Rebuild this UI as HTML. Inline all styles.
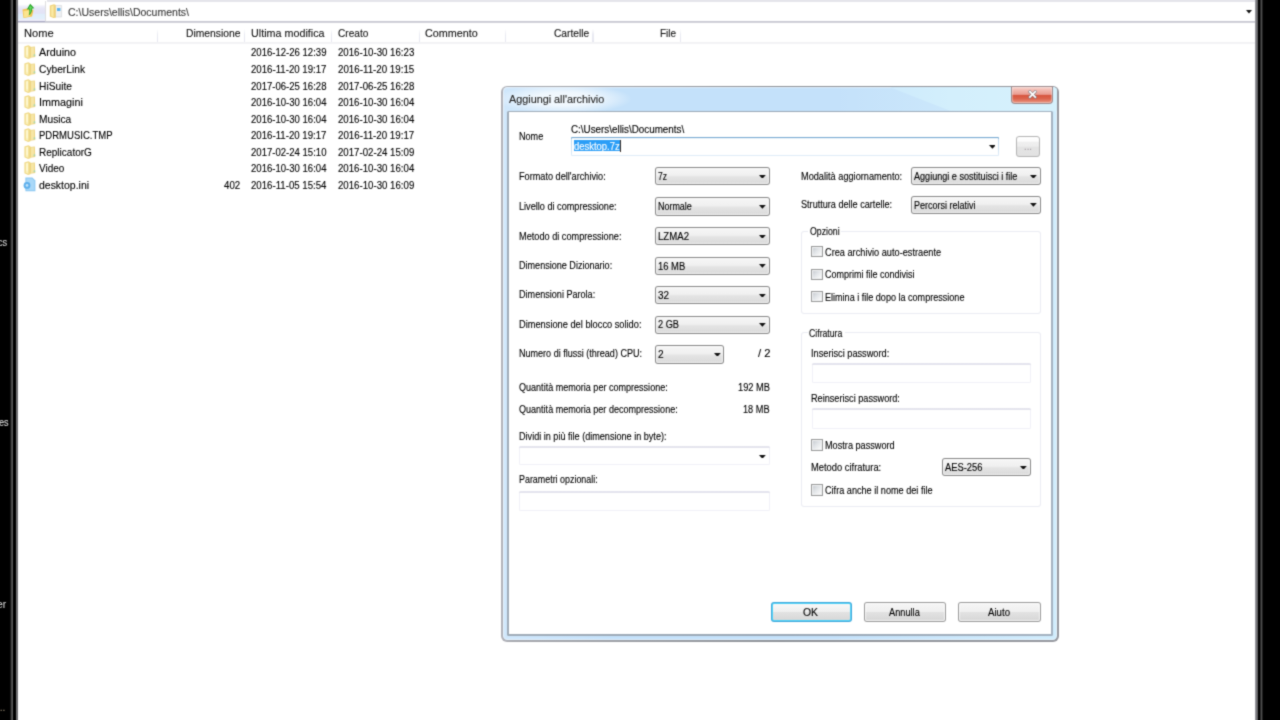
<!DOCTYPE html>
<html lang="it"><head><meta charset="utf-8"><title>Aggiungi all'archivio</title>
<style>
html,body{margin:0;padding:0;background:#000;}
body{width:1280px;height:720px;overflow:hidden;font-family:"Liberation Sans",sans-serif;}
#wrap{position:absolute;left:-20px;top:-20px;width:1320px;height:760px;overflow:hidden;background:#000;filter:url(#soft);}
#root{position:absolute;left:20px;top:20px;width:1280px;height:720px;background:#000;}
.t{position:absolute;-webkit-text-stroke:0.12px currentColor;transform-origin:0 0;white-space:pre;line-height:14px;height:14px;display:block;}

</style></head>
<body>
<svg width="0" height="0" style="position:absolute" aria-hidden="true"><defs><filter id="soft" x="0" y="0" width="100%" height="100%" color-interpolation-filters="sRGB"><feConvolveMatrix order="3" kernelMatrix="0.03 0.1 0.03 0.1 0.48 0.1 0.03 0.1 0.03" divisor="1" edgeMode="duplicate" preserveAlpha="true"/></filter></defs></svg>
<div id="wrap"><div id="root">
<div style="position:absolute;left:-20.00px;top:-20.00px;width:1320.00px;height:760.00px;background:#000"></div>
<div style="position:absolute;left:10.40px;top:-20.00px;width:2.80px;height:760.00px;background:linear-gradient(90deg,#000 0%,#303030 30%,#5c5c5c 70%,#585858 100%)"></div>
<div style="position:absolute;left:13.20px;top:-20.00px;width:2.60px;height:760.00px;background:#000"></div>
<div style="position:absolute;left:15.80px;top:-20.00px;width:2.40px;height:760.00px;background:linear-gradient(90deg,#5a5a5a 0%,#747474 25%,#727274 60%,#68686e 88%,#9c9ca4 100%)"></div>
<div style="position:absolute;left:1254.60px;top:-20.00px;width:3.70px;height:760.00px;background:linear-gradient(90deg,#c8c8ce 0%,#8c8c92 20%,#747478 55%,#585858 100%)"></div>
<div style="position:absolute;left:1258.30px;top:-20.00px;width:1.70px;height:760.00px;background:#020202"></div>
<div style="position:absolute;left:1259.70px;top:-20.00px;width:3.50px;height:760.00px;background:linear-gradient(90deg,#141414 0%,#3c3c3c 30%,#4e4e4e 50%,#3a3a3a 70%,#000 100%)"></div>
<div style="position:absolute;left:18.10px;top:-20.00px;width:1236.60px;height:760.00px;background:#fff"></div>
<div style="position:absolute;left:46.60px;top:-20.00px;width:1208.10px;height:22.30px;background:#e5e5eb"></div>
<div style="position:absolute;left:18.10px;top:0.00px;width:26.50px;height:21.50px;background:linear-gradient(180deg,#fff 0%,#fff 20%,#f0f0fa 28%,#e5e5f6 40%,#e3e3f6 60%,#e0eefb 66%,#e2effb 84%,#eeeefa 90%,#f0f0fa 100%)"></div>
<div style="position:absolute;left:44.60px;top:1.00px;width:1.80px;height:20.50px;background:linear-gradient(90deg,#f2f2f2,#dedee0 50%,#f4f4f4)"></div>
<div style="position:absolute;left:18.10px;top:21.00px;width:1236.60px;height:1.60px;background:linear-gradient(180deg,#d0d0d8,#c2c2cc 50%,#e4e4ea)"></div>
<div style="position:absolute;left:18.10px;top:20.80px;width:26.90px;height:1.60px;background:linear-gradient(180deg,#c0c0d6,#a9a9c4 50%,#d0d0de)"></div>
<svg style="position:absolute;left:21px;top:3px" width="15" height="16" viewBox="0 0 15 16">
<path d="M1.5 6.5 L6 5.5 L12.5 7 L11 13.5 L2.5 15 Z" fill="#f3c453"/>
<path d="M2.5 8 L9 7 L8.5 13.2 L3 14.5 Z" fill="#fbe48f"/>
<path d="M9.2 0.8 L13.3 5.2 L11.2 5.6 C11.3 8.5 10 11 7.6 12.6 C8.6 10 8.6 7.8 8 6.2 L5.8 6.6 Z" fill="#25a325"/>
<path d="M9.3 2.6 L11.6 5 L10.3 5.2 C10.4 7.5 9.8 9.3 8.8 10.6 C9.2 8.6 9.1 7 8.7 5.4 L7.6 5.6 Z" fill="#5fd65a"/>
</svg>
<svg style="position:absolute;left:49px;top:2.6px" width="14" height="16" viewBox="0 0 14 16">
<path d="M6.5 2.5 L12.6 2.5 L12.6 14 L6.5 14 Z" fill="#eef0f2" stroke="#d2d4d8" stroke-width="0.6"/>
<rect x="8" y="5" width="3.4" height="3" fill="#5db3ee"/>
<path d="M0.8 2.6 L5 1.2 L6.8 2 L6.8 14.8 L4.4 15 L0.8 13.4 Z" fill="#efd27c"/>
<path d="M2.2 3.2 L4.6 2.4 L4.6 14 L2.2 13 Z" fill="#faeaa6"/>
</svg>
<span class="t " style="left:67.80px;top:5.00px;font-size:10.6px;transform:scaleX(0.9930);color:#3a3a3a;">C:\Users\ellis\Documents\</span>
<svg style="position:absolute;left:1245.6px;top:10px" width="6" height="3.6" viewBox="0 0 6 3.6"><path d="M0 0 L6 0 L3 3.6 Z" fill="#111"/></svg>
<span class="t " style="left:24.20px;top:26.40px;font-size:10.6px;transform:scaleX(1.0494);color:#141414;">Nome</span>
<span class="t " style="left:185.80px;top:26.40px;font-size:10.6px;transform:scaleX(0.9738);color:#141414;">Dimensione</span>
<span class="t " style="left:250.80px;top:26.40px;font-size:10.6px;transform:scaleX(1.0151);color:#141414;">Ultima modifica</span>
<span class="t " style="left:337.80px;top:26.40px;font-size:10.6px;transform:scaleX(0.9528);color:#141414;">Creato</span>
<span class="t " style="left:424.80px;top:26.40px;font-size:10.6px;transform:scaleX(1.0167);color:#141414;">Commento</span>
<span class="t " style="left:553.50px;top:26.40px;font-size:10.6px;transform:scaleX(0.9639);color:#141414;">Cartelle</span>
<span class="t " style="left:659.70px;top:26.40px;font-size:10.6px;transform:scaleX(0.9434);color:#141414;">File</span>
<div style="position:absolute;left:156.90px;top:29.00px;width:1.20px;height:14.00px;background:linear-gradient(180deg,#fff,#e9eaf2 40%,#e6e7f0)"></div>
<div style="position:absolute;left:243.90px;top:29.00px;width:1.20px;height:14.00px;background:linear-gradient(180deg,#fff,#e9eaf2 40%,#e6e7f0)"></div>
<div style="position:absolute;left:331.20px;top:29.00px;width:1.20px;height:14.00px;background:linear-gradient(180deg,#fff,#e9eaf2 40%,#e6e7f0)"></div>
<div style="position:absolute;left:418.80px;top:29.00px;width:1.20px;height:14.00px;background:linear-gradient(180deg,#fff,#e9eaf2 40%,#e6e7f0)"></div>
<div style="position:absolute;left:504.70px;top:29.00px;width:1.20px;height:14.00px;background:linear-gradient(180deg,#fff,#e9eaf2 40%,#e6e7f0)"></div>
<div style="position:absolute;left:592.40px;top:29.00px;width:1.20px;height:14.00px;background:linear-gradient(180deg,#fff,#e9eaf2 40%,#e6e7f0)"></div>
<div style="position:absolute;left:679.80px;top:29.00px;width:1.20px;height:14.00px;background:linear-gradient(180deg,#fff,#e9eaf2 40%,#e6e7f0)"></div>
<div style="position:absolute;left:18.10px;top:42.40px;width:1236.60px;height:1.40px;background:linear-gradient(180deg,#f6f6f8,#eeeef1 50%,#f8f8fa)"></div>
<svg style="position:absolute;left:23.5px;top:44.7px" width="12.6" height="14.2" viewBox="0 0 13 15" preserveAspectRatio="none">
<path d="M6.2 2.2 L11.2 1.6 L11.6 12.6 L6.2 13.6 Z" fill="#ecd27e"/>
<path d="M7.2 2.6 L10.4 2.3 L10.6 12 L7.2 12.6 Z" fill="#f6e6a6"/>
<path d="M0.4 1.6 L4.4 0.3 L6.7 1.2 L6.7 14 L4.2 14.7 L0.4 13 Z" fill="#f0d988"/>
<path d="M1.7 2.3 L4.5 1.5 L4.5 13.4 L1.7 12.3 Z" fill="#fbf1b8"/>
<path d="M2.6 2.6 L3.8 2.2 L3.8 11 L2.6 10.4 Z" fill="#fefbe0"/>
<path d="M10 10 L11.5 9.8 L11.6 11.6 L10 11.9 Z" fill="#9fd4b0"/>
</svg>
<span class="t " style="left:39.00px;top:45.00px;font-size:10.6px;transform:scaleX(1.0146);color:#000;">Arduino</span>
<span class="t " style="left:250.80px;top:45.00px;font-size:10.6px;transform:scaleX(0.9022);color:#000;">2016-12-26 12:39</span>
<span class="t " style="left:337.80px;top:45.00px;font-size:10.6px;transform:scaleX(0.9117);color:#000;">2016-10-30 16:23</span>
<svg style="position:absolute;left:23.5px;top:61.7px" width="12.6" height="14.2" viewBox="0 0 13 15" preserveAspectRatio="none">
<path d="M6.2 2.2 L11.2 1.6 L11.6 12.6 L6.2 13.6 Z" fill="#ecd27e"/>
<path d="M7.2 2.6 L10.4 2.3 L10.6 12 L7.2 12.6 Z" fill="#f6e6a6"/>
<path d="M0.4 1.6 L4.4 0.3 L6.7 1.2 L6.7 14 L4.2 14.7 L0.4 13 Z" fill="#f0d988"/>
<path d="M1.7 2.3 L4.5 1.5 L4.5 13.4 L1.7 12.3 Z" fill="#fbf1b8"/>
<path d="M2.6 2.6 L3.8 2.2 L3.8 11 L2.6 10.4 Z" fill="#fefbe0"/>
<path d="M10 10 L11.5 9.8 L11.6 11.6 L10 11.9 Z" fill="#9fd4b0"/>
</svg>
<span class="t " style="left:39.00px;top:62.00px;font-size:10.6px;transform:scaleX(0.9643);color:#000;">CyberLink</span>
<span class="t " style="left:250.80px;top:62.00px;font-size:10.6px;transform:scaleX(0.9108);color:#000;">2016-11-20 19:17</span>
<span class="t " style="left:337.80px;top:62.00px;font-size:10.6px;transform:scaleX(0.9205);color:#000;">2016-11-20 19:15</span>
<svg style="position:absolute;left:23.5px;top:78.7px" width="12.6" height="14.2" viewBox="0 0 13 15" preserveAspectRatio="none">
<path d="M6.2 2.2 L11.2 1.6 L11.6 12.6 L6.2 13.6 Z" fill="#ecd27e"/>
<path d="M7.2 2.6 L10.4 2.3 L10.6 12 L7.2 12.6 Z" fill="#f6e6a6"/>
<path d="M0.4 1.6 L4.4 0.3 L6.7 1.2 L6.7 14 L4.2 14.7 L0.4 13 Z" fill="#f0d988"/>
<path d="M1.7 2.3 L4.5 1.5 L4.5 13.4 L1.7 12.3 Z" fill="#fbf1b8"/>
<path d="M2.6 2.6 L3.8 2.2 L3.8 11 L2.6 10.4 Z" fill="#fefbe0"/>
<path d="M10 10 L11.5 9.8 L11.6 11.6 L10 11.9 Z" fill="#9fd4b0"/>
</svg>
<span class="t " style="left:39.00px;top:79.00px;font-size:10.6px;transform:scaleX(0.9653);color:#000;">HiSuite</span>
<span class="t " style="left:250.80px;top:79.00px;font-size:10.6px;transform:scaleX(0.9022);color:#000;">2017-06-25 16:28</span>
<span class="t " style="left:337.80px;top:79.00px;font-size:10.6px;transform:scaleX(0.9117);color:#000;">2017-06-25 16:28</span>
<svg style="position:absolute;left:23.5px;top:94.7px" width="12.6" height="14.2" viewBox="0 0 13 15" preserveAspectRatio="none">
<path d="M6.2 2.2 L11.2 1.6 L11.6 12.6 L6.2 13.6 Z" fill="#ecd27e"/>
<path d="M7.2 2.6 L10.4 2.3 L10.6 12 L7.2 12.6 Z" fill="#f6e6a6"/>
<path d="M0.4 1.6 L4.4 0.3 L6.7 1.2 L6.7 14 L4.2 14.7 L0.4 13 Z" fill="#f0d988"/>
<path d="M1.7 2.3 L4.5 1.5 L4.5 13.4 L1.7 12.3 Z" fill="#fbf1b8"/>
<path d="M2.6 2.6 L3.8 2.2 L3.8 11 L2.6 10.4 Z" fill="#fefbe0"/>
<path d="M10 10 L11.5 9.8 L11.6 11.6 L10 11.9 Z" fill="#9fd4b0"/>
</svg>
<span class="t " style="left:39.00px;top:95.00px;font-size:10.6px;transform:scaleX(1.0213);color:#000;">Immagini</span>
<span class="t " style="left:250.80px;top:95.00px;font-size:10.6px;transform:scaleX(0.9022);color:#000;">2016-10-30 16:04</span>
<span class="t " style="left:337.80px;top:95.00px;font-size:10.6px;transform:scaleX(0.9117);color:#000;">2016-10-30 16:04</span>
<svg style="position:absolute;left:23.5px;top:111.7px" width="12.6" height="14.2" viewBox="0 0 13 15" preserveAspectRatio="none">
<path d="M6.2 2.2 L11.2 1.6 L11.6 12.6 L6.2 13.6 Z" fill="#ecd27e"/>
<path d="M7.2 2.6 L10.4 2.3 L10.6 12 L7.2 12.6 Z" fill="#f6e6a6"/>
<path d="M0.4 1.6 L4.4 0.3 L6.7 1.2 L6.7 14 L4.2 14.7 L0.4 13 Z" fill="#f0d988"/>
<path d="M1.7 2.3 L4.5 1.5 L4.5 13.4 L1.7 12.3 Z" fill="#fbf1b8"/>
<path d="M2.6 2.6 L3.8 2.2 L3.8 11 L2.6 10.4 Z" fill="#fefbe0"/>
<path d="M10 10 L11.5 9.8 L11.6 11.6 L10 11.9 Z" fill="#9fd4b0"/>
</svg>
<span class="t " style="left:39.00px;top:112.00px;font-size:10.6px;transform:scaleX(0.9613);color:#000;">Musica</span>
<span class="t " style="left:250.80px;top:112.00px;font-size:10.6px;transform:scaleX(0.9022);color:#000;">2016-10-30 16:04</span>
<span class="t " style="left:337.80px;top:112.00px;font-size:10.6px;transform:scaleX(0.9117);color:#000;">2016-10-30 16:04</span>
<svg style="position:absolute;left:23.5px;top:127.7px" width="12.6" height="14.2" viewBox="0 0 13 15" preserveAspectRatio="none">
<path d="M6.2 2.2 L11.2 1.6 L11.6 12.6 L6.2 13.6 Z" fill="#ecd27e"/>
<path d="M7.2 2.6 L10.4 2.3 L10.6 12 L7.2 12.6 Z" fill="#f6e6a6"/>
<path d="M0.4 1.6 L4.4 0.3 L6.7 1.2 L6.7 14 L4.2 14.7 L0.4 13 Z" fill="#f0d988"/>
<path d="M1.7 2.3 L4.5 1.5 L4.5 13.4 L1.7 12.3 Z" fill="#fbf1b8"/>
<path d="M2.6 2.6 L3.8 2.2 L3.8 11 L2.6 10.4 Z" fill="#fefbe0"/>
<path d="M10 10 L11.5 9.8 L11.6 11.6 L10 11.9 Z" fill="#9fd4b0"/>
</svg>
<span class="t " style="left:39.00px;top:128.00px;font-size:10.6px;transform:scaleX(0.8988);color:#000;">PDRMUSIC.TMP</span>
<span class="t " style="left:250.80px;top:128.00px;font-size:10.6px;transform:scaleX(0.9108);color:#000;">2016-11-20 19:17</span>
<span class="t " style="left:337.80px;top:128.00px;font-size:10.6px;transform:scaleX(0.9205);color:#000;">2016-11-20 19:17</span>
<svg style="position:absolute;left:23.5px;top:144.7px" width="12.6" height="14.2" viewBox="0 0 13 15" preserveAspectRatio="none">
<path d="M6.2 2.2 L11.2 1.6 L11.6 12.6 L6.2 13.6 Z" fill="#ecd27e"/>
<path d="M7.2 2.6 L10.4 2.3 L10.6 12 L7.2 12.6 Z" fill="#f6e6a6"/>
<path d="M0.4 1.6 L4.4 0.3 L6.7 1.2 L6.7 14 L4.2 14.7 L0.4 13 Z" fill="#f0d988"/>
<path d="M1.7 2.3 L4.5 1.5 L4.5 13.4 L1.7 12.3 Z" fill="#fbf1b8"/>
<path d="M2.6 2.6 L3.8 2.2 L3.8 11 L2.6 10.4 Z" fill="#fefbe0"/>
<path d="M10 10 L11.5 9.8 L11.6 11.6 L10 11.9 Z" fill="#9fd4b0"/>
</svg>
<span class="t " style="left:39.00px;top:145.00px;font-size:10.6px;transform:scaleX(0.9452);color:#000;">ReplicatorG</span>
<span class="t " style="left:250.80px;top:145.00px;font-size:10.6px;transform:scaleX(0.9022);color:#000;">2017-02-24 15:10</span>
<span class="t " style="left:337.80px;top:145.00px;font-size:10.6px;transform:scaleX(0.9117);color:#000;">2017-02-24 15:09</span>
<svg style="position:absolute;left:23.5px;top:160.7px" width="12.6" height="14.2" viewBox="0 0 13 15" preserveAspectRatio="none">
<path d="M6.2 2.2 L11.2 1.6 L11.6 12.6 L6.2 13.6 Z" fill="#ecd27e"/>
<path d="M7.2 2.6 L10.4 2.3 L10.6 12 L7.2 12.6 Z" fill="#f6e6a6"/>
<path d="M0.4 1.6 L4.4 0.3 L6.7 1.2 L6.7 14 L4.2 14.7 L0.4 13 Z" fill="#f0d988"/>
<path d="M1.7 2.3 L4.5 1.5 L4.5 13.4 L1.7 12.3 Z" fill="#fbf1b8"/>
<path d="M2.6 2.6 L3.8 2.2 L3.8 11 L2.6 10.4 Z" fill="#fefbe0"/>
<path d="M10 10 L11.5 9.8 L11.6 11.6 L10 11.9 Z" fill="#9fd4b0"/>
</svg>
<span class="t " style="left:39.00px;top:161.00px;font-size:10.6px;transform:scaleX(0.9434);color:#000;">Video</span>
<span class="t " style="left:250.80px;top:161.00px;font-size:10.6px;transform:scaleX(0.9022);color:#000;">2016-10-30 16:04</span>
<span class="t " style="left:337.80px;top:161.00px;font-size:10.6px;transform:scaleX(0.9117);color:#000;">2016-10-30 16:04</span>
<svg style="position:absolute;left:23.1px;top:177.4px" width="13" height="15" viewBox="0 0 13 15">
<path d="M2.4 0.6 L9.4 0.6 L12.4 3.4 L12.4 14.2 L2.4 14.2 Z" fill="#8cc8f2"/>
<path d="M3.4 1.6 L9 1.6 L11.4 4 L11.4 13.2 L3.4 13.2 Z" fill="#a9d8f8"/>
<circle cx="4" cy="8.4" r="3.4" fill="#5fb0ec"/>
<circle cx="4" cy="8.4" r="1.4" fill="#bfe2fa"/>
</svg>
<span class="t " style="left:39.00px;top:178.00px;font-size:10.6px;transform:scaleX(0.9878);color:#000;">desktop.ini</span>
<span class="t " style="left:224.10px;top:178.00px;font-size:10.6px;transform:scaleX(0.9152);color:#000;">402</span>
<span class="t " style="left:250.80px;top:178.00px;font-size:10.6px;transform:scaleX(0.9108);color:#000;">2016-11-05 15:54</span>
<span class="t " style="left:337.80px;top:178.00px;font-size:10.6px;transform:scaleX(0.9117);color:#000;">2016-10-30 16:09</span>
<span class="t " style="left:-1.60px;top:235.00px;font-size:11.5px;transform:scaleX(0.8000);color:#d2d2d2;">cs</span>
<span class="t " style="left:-0.80px;top:415.00px;font-size:10.5px;transform:scaleX(0.8666);color:#dcdcdc;">es</span>
<span class="t " style="left:-2.60px;top:596.50px;font-size:11.5px;transform:scaleX(0.8891);color:#cfcfcf;">er</span>
<span class="t " style="left:-3.20px;top:700.00px;font-size:11px;transform:scaleX(0.9145);color:#9a8c74;">...</span>
<div style="position:absolute;left:501.20px;top:85.80px;width:557.60px;height:556.20px;border-radius:6px;background:linear-gradient(90deg,#b2b3ba 0%,#a6a8ae 2%,#8e9298 50%,#96989f 100%);"></div>
<div style="position:absolute;left:503.40px;top:87.30px;width:553.80px;height:552.50px;border-radius:4.5px;background:linear-gradient(90deg,#d0e7fb 0%,#c4e1fa 20%,#c4e1fa 60%,#cbe7fb 80%,#d0ecfc 100%);box-shadow:inset 0 0 0 1px rgba(255,255,255,.45)"></div>
<div style="position:absolute;left:880px;top:87.3px;width:177.2px;height:23.5px;background:linear-gradient(90deg,#cdeafc 0%,#d3effc 40%,#d6f1fc 100%);clip-path:polygon(10px 0,100% 0,100% 100%,70px 100%);border-radius:0 4px 0 0"></div>
<div style="position:absolute;left:496.00px;top:84.00px;width:136.00px;height:30.00px;background:radial-gradient(ellipse 50% 50% at center,rgba(255,255,255,.8) 0%,rgba(255,255,255,.7) 45%,rgba(255,255,255,.35) 75%,rgba(255,255,255,0) 100%);clip-path:inset(3px 0 2.5px 6.5px)"></div>
<span class="t " style="left:508.60px;top:92.30px;font-size:10.8px;transform:scaleX(1.0016);color:#262626;">Aggiungi all&#x27;archivio</span>
<div style="position:absolute;left:1011.2px;top:86.4px;width:41.6px;height:17.4px;border-radius:0 0 4px 4px;background:#9c8a8c;"></div>
<div style="position:absolute;left:1012.2px;top:87px;width:39.6px;height:15.9px;border-radius:0 0 3px 3px;background:linear-gradient(180deg,#f8d2cb 0%,#f0b3a9 25%,#e99d92 46%,#d7563f 52%,#db634c 72%,#e99682 100%);box-shadow:inset 0 0 0 1px rgba(255,255,255,.35)"></div>
<svg style="position:absolute;left:1028.2px;top:90.4px" width="9.2" height="8.8" viewBox="0 0 9.2 8.8"><path d="M1.9 1.7 L7.3 7.1 M7.3 1.7 L1.9 7.1" stroke="#6f7c8a" stroke-opacity=".75" stroke-width="3" stroke-linecap="square"/><path d="M1.9 1.7 L7.3 7.1 M7.3 1.7 L1.9 7.1" stroke="#fff" stroke-width="1.7" stroke-linecap="square"/></svg>
<div style="position:absolute;left:507.40px;top:110.80px;width:545.80px;height:525.40px;border-radius:1.5px;background:linear-gradient(90deg,#a0acb8 0%,#9aa8b6 50%,#a4b2c0 100%)"></div>
<div style="position:absolute;left:509.00px;top:112.10px;width:542.40px;height:522.10px;background:#fff"></div>
<span class="t " style="left:518.90px;top:129.50px;font-size:10px;transform:scaleX(0.9064);color:#000;">Nome</span>
<span class="t " style="left:570.70px;top:123.20px;font-size:10px;transform:scaleX(0.9839);color:#000;">C:\Users\ellis\Documents\</span>
<div style="position:absolute;left:571.00px;top:137.30px;width:428.40px;height:18.40px;border-radius:1px;background:linear-gradient(180deg,#6ea3cd 0%,#8db9da 7%,#c4dcef 13%,#cde1f2 60%,#e0edf8 100%)"></div>
<div style="position:absolute;left:572.00px;top:138.40px;width:426.40px;height:16.40px;background:linear-gradient(180deg,#e6f0f8 0,#fff 1.4px)"></div>
<div style="position:absolute;left:573.80px;top:140.20px;width:46.80px;height:11.30px;background:#2b9ef7"></div>
<span class="t " style="left:573.90px;top:140.30px;font-size:10px;transform:scaleX(0.9431);color:#fff;">desktop.7z</span>
<div style="position:absolute;left:620.30px;top:140.40px;width:0.90px;height:11.20px;background:#3a2a20"></div>
<svg style="position:absolute;left:988.6px;top:145.2px" width="6.8" height="3.8" viewBox="0 0 6.8 3.8"><path d="M0 0 L6.8 0 L3.4 3.8 Z" fill="#111"/></svg>
<div style="position:absolute;left:1015.60px;top:135.70px;width:24.80px;height:21.20px;border-radius:3.5px;background:#b4b4b4"></div>
<div style="position:absolute;left:1016.90px;top:137.00px;width:22.20px;height:18.60px;border-radius:2px;background:linear-gradient(180deg,#fff 0%,#fcfcfc 22%,#efefef 28%,#ededed 48%,#e3e3e3 54%,#e2e2e2 100%)"></div>
<span class="t " style="left:1023.50px;top:140.40px;font-size:10px;transform:scaleX(0.9581);color:#a8a0a8;">...</span>
<span class="t " style="left:518.90px;top:170.40px;font-size:10px;transform:scaleX(0.9150);color:#000;">Formato dell&#x27;archivio:</span>
<div style="position:absolute;left:654.80px;top:167.20px;width:114.80px;height:17.80px;border-radius:3px;background:#888"></div>
<div style="position:absolute;left:655.80px;top:168.20px;width:112.80px;height:15.80px;border-radius:2px;background:linear-gradient(180deg,#f6f6f6 0%,#f0f0f0 45%,#e4e4e4 55%,#dadada 100%);box-shadow:inset 0 0 0 1px rgba(255,255,255,.6)"></div>
<svg style="position:absolute;left:759.00px;top:174.50px" width="6.8" height="3.8" viewBox="0 0 6.8 3.8"><path d="M0 0 L6.8 0 L3.4 3.8 Z" fill="#111"/></svg>
<span class="t " style="left:657.90px;top:169.60px;font-size:10px;transform:scaleX(0.8531);color:#000;">7z</span>
<span class="t " style="left:518.90px;top:200.00px;font-size:10px;transform:scaleX(0.9138);color:#000;">Livello di compressione:</span>
<div style="position:absolute;left:654.80px;top:197.30px;width:114.80px;height:18.30px;border-radius:3px;background:#888"></div>
<div style="position:absolute;left:655.80px;top:198.30px;width:112.80px;height:16.30px;border-radius:2px;background:linear-gradient(180deg,#f6f6f6 0%,#f0f0f0 45%,#e4e4e4 55%,#dadada 100%);box-shadow:inset 0 0 0 1px rgba(255,255,255,.6)"></div>
<svg style="position:absolute;left:759.00px;top:204.85px" width="6.8" height="3.8" viewBox="0 0 6.8 3.8"><path d="M0 0 L6.8 0 L3.4 3.8 Z" fill="#111"/></svg>
<span class="t " style="left:657.90px;top:200.30px;font-size:10px;transform:scaleX(0.8942);color:#000;">Normale</span>
<span class="t " style="left:518.90px;top:229.60px;font-size:10px;transform:scaleX(0.9172);color:#000;">Metodo di compressione:</span>
<div style="position:absolute;left:654.80px;top:227.30px;width:114.80px;height:17.90px;border-radius:3px;background:#888"></div>
<div style="position:absolute;left:655.80px;top:228.30px;width:112.80px;height:15.90px;border-radius:2px;background:linear-gradient(180deg,#f6f6f6 0%,#f0f0f0 45%,#e4e4e4 55%,#dadada 100%);box-shadow:inset 0 0 0 1px rgba(255,255,255,.6)"></div>
<svg style="position:absolute;left:759.00px;top:234.65px" width="6.8" height="3.8" viewBox="0 0 6.8 3.8"><path d="M0 0 L6.8 0 L3.4 3.8 Z" fill="#111"/></svg>
<span class="t " style="left:657.90px;top:230.00px;font-size:10px;transform:scaleX(0.9612);color:#000;">LZMA2</span>
<span class="t " style="left:518.90px;top:258.90px;font-size:10px;transform:scaleX(0.9062);color:#000;">Dimensione Dizionario:</span>
<div style="position:absolute;left:654.80px;top:256.90px;width:114.80px;height:17.70px;border-radius:3px;background:#888"></div>
<div style="position:absolute;left:655.80px;top:257.90px;width:112.80px;height:15.70px;border-radius:2px;background:linear-gradient(180deg,#f6f6f6 0%,#f0f0f0 45%,#e4e4e4 55%,#dadada 100%);box-shadow:inset 0 0 0 1px rgba(255,255,255,.6)"></div>
<svg style="position:absolute;left:759.00px;top:264.15px" width="6.8" height="3.8" viewBox="0 0 6.8 3.8"><path d="M0 0 L6.8 0 L3.4 3.8 Z" fill="#111"/></svg>
<span class="t " style="left:657.90px;top:259.60px;font-size:10px;transform:scaleX(0.9412);color:#000;">16 MB</span>
<span class="t " style="left:518.90px;top:288.20px;font-size:10px;transform:scaleX(0.9077);color:#000;">Dimensioni Parola:</span>
<div style="position:absolute;left:654.80px;top:286.30px;width:114.80px;height:18.00px;border-radius:3px;background:#888"></div>
<div style="position:absolute;left:655.80px;top:287.30px;width:112.80px;height:16.00px;border-radius:2px;background:linear-gradient(180deg,#f6f6f6 0%,#f0f0f0 45%,#e4e4e4 55%,#dadada 100%);box-shadow:inset 0 0 0 1px rgba(255,255,255,.6)"></div>
<svg style="position:absolute;left:759.00px;top:293.70px" width="6.8" height="3.8" viewBox="0 0 6.8 3.8"><path d="M0 0 L6.8 0 L3.4 3.8 Z" fill="#111"/></svg>
<span class="t " style="left:657.90px;top:289.00px;font-size:10px;transform:scaleX(0.9910);color:#000;">32</span>
<span class="t " style="left:518.90px;top:317.60px;font-size:10px;transform:scaleX(0.9259);color:#000;">Dimensione del blocco solido:</span>
<div style="position:absolute;left:654.80px;top:315.80px;width:114.80px;height:18.00px;border-radius:3px;background:#888"></div>
<div style="position:absolute;left:655.80px;top:316.80px;width:112.80px;height:16.00px;border-radius:2px;background:linear-gradient(180deg,#f6f6f6 0%,#f0f0f0 45%,#e4e4e4 55%,#dadada 100%);box-shadow:inset 0 0 0 1px rgba(255,255,255,.6)"></div>
<svg style="position:absolute;left:759.00px;top:323.20px" width="6.8" height="3.8" viewBox="0 0 6.8 3.8"><path d="M0 0 L6.8 0 L3.4 3.8 Z" fill="#111"/></svg>
<span class="t " style="left:657.90px;top:318.40px;font-size:10px;transform:scaleX(0.9211);color:#000;">2 GB</span>
<span class="t " style="left:518.90px;top:347.00px;font-size:10px;transform:scaleX(0.9034);color:#000;">Numero di flussi (thread) CPU:</span>
<div style="position:absolute;left:654.80px;top:345.00px;width:69.60px;height:18.60px;border-radius:3px;background:#888"></div>
<div style="position:absolute;left:655.80px;top:346.00px;width:67.60px;height:16.60px;border-radius:2px;background:linear-gradient(180deg,#f6f6f6 0%,#f0f0f0 45%,#e4e4e4 55%,#dadada 100%);box-shadow:inset 0 0 0 1px rgba(255,255,255,.6)"></div>
<svg style="position:absolute;left:713.80px;top:352.70px" width="6.8" height="3.8" viewBox="0 0 6.8 3.8"><path d="M0 0 L6.8 0 L3.4 3.8 Z" fill="#111"/></svg>
<span class="t " style="left:657.90px;top:348.00px;font-size:10px;transform:scaleX(1.0090);color:#000;">2</span>
<span class="t " style="left:758.10px;top:347.20px;font-size:10px;transform:scaleX(1.1261);color:#000;">/ 2</span>
<span class="t " style="left:518.90px;top:380.50px;font-size:10px;transform:scaleX(0.9040);color:#000;">Quantità memoria per compressione:</span>
<span class="t " style="left:737.60px;top:380.50px;font-size:10px;transform:scaleX(0.9289);color:#000;">192 MB</span>
<span class="t " style="left:518.90px;top:403.00px;font-size:10px;transform:scaleX(0.9035);color:#000;">Quantità memoria per decompressione:</span>
<span class="t " style="left:743.10px;top:403.00px;font-size:10px;transform:scaleX(0.9170);color:#000;">18 MB</span>
<span class="t " style="left:518.90px;top:430.00px;font-size:10px;transform:scaleX(0.9088);color:#000;">Dividi in più file (dimensione in byte):</span>
<div style="position:absolute;left:519.20px;top:446.40px;width:250.60px;height:18.80px;border-radius:1.5px;background:linear-gradient(180deg,#e5e5ee 0,#e3e3ed 1.6px,#f0f0f7 2.2px,#f1f1f7 100%)"></div>
<div style="position:absolute;left:520.20px;top:448.40px;width:248.60px;height:15.80px;background:#fff"></div>
<svg style="position:absolute;left:758.8px;top:454.6px" width="6.8" height="3.8" viewBox="0 0 6.8 3.8"><path d="M0 0 L6.8 0 L3.4 3.8 Z" fill="#111"/></svg>
<span class="t " style="left:518.90px;top:473.00px;font-size:10px;transform:scaleX(0.8903);color:#000;">Parametri opzionali:</span>
<div style="position:absolute;left:519.20px;top:490.80px;width:250.60px;height:20.00px;border-radius:1.5px;background:linear-gradient(180deg,#e5e5ee 0,#e3e3ed 1.6px,#f0f0f7 2.2px,#f1f1f7 100%)"></div>
<div style="position:absolute;left:520.20px;top:492.80px;width:248.60px;height:17.00px;background:#fff"></div>
<span class="t " style="left:801.00px;top:170.20px;font-size:10px;transform:scaleX(0.9187);color:#000;">Modalità aggiornamento:</span>
<div style="position:absolute;left:910.60px;top:167.20px;width:130.20px;height:17.80px;border-radius:3px;background:#888"></div>
<div style="position:absolute;left:911.60px;top:168.20px;width:128.20px;height:15.80px;border-radius:2px;background:linear-gradient(180deg,#f6f6f6 0%,#f0f0f0 45%,#e4e4e4 55%,#dadada 100%);box-shadow:inset 0 0 0 1px rgba(255,255,255,.6)"></div>
<svg style="position:absolute;left:1030.40px;top:174.50px" width="6.8" height="3.8" viewBox="0 0 6.8 3.8"><path d="M0 0 L6.8 0 L3.4 3.8 Z" fill="#111"/></svg>
<span class="t " style="left:913.70px;top:169.80px;font-size:10px;transform:scaleX(0.9074);color:#000;">Aggiungi e sostituisci i file</span>
<span class="t " style="left:801.00px;top:198.40px;font-size:10px;transform:scaleX(0.9105);color:#000;">Struttura delle cartelle:</span>
<div style="position:absolute;left:910.60px;top:196.20px;width:130.20px;height:17.70px;border-radius:3px;background:#888"></div>
<div style="position:absolute;left:911.60px;top:197.20px;width:128.20px;height:15.70px;border-radius:2px;background:linear-gradient(180deg,#f6f6f6 0%,#f0f0f0 45%,#e4e4e4 55%,#dadada 100%);box-shadow:inset 0 0 0 1px rgba(255,255,255,.6)"></div>
<svg style="position:absolute;left:1030.40px;top:203.45px" width="6.8" height="3.8" viewBox="0 0 6.8 3.8"><path d="M0 0 L6.8 0 L3.4 3.8 Z" fill="#111"/></svg>
<span class="t " style="left:913.70px;top:198.60px;font-size:10px;transform:scaleX(0.8983);color:#000;">Percorsi relativi</span>
<div style="position:absolute;left:801.40px;top:231.00px;width:239.40px;height:83.40px;border-radius:3px;background:#ebecf3"></div>
<div style="position:absolute;left:802.40px;top:232.00px;width:237.40px;height:81.40px;border-radius:2px;background:#fff"></div>
<div style="position:absolute;left:808.20px;top:230.00px;width:33.30px;height:3.00px;background:#fff"></div>
<span class="t " style="left:809.50px;top:225.00px;font-size:10px;transform:scaleX(0.8732);color:#000;">Opzioni</span>
<div style="position:absolute;left:811.40px;top:246.00px;width:11.30px;height:11.30px;background:#989999"></div>
<div style="position:absolute;left:812.40px;top:247.00px;width:9.30px;height:9.30px;background:#f2f3f4"></div>
<div style="position:absolute;left:813.40px;top:248.00px;width:7.30px;height:7.30px;background:linear-gradient(135deg,#c9cdd2 0%,#e2e5e8 45%,#fafafa 100%)"></div>
<span class="t " style="left:824.50px;top:245.80px;font-size:10px;transform:scaleX(0.9200);color:#000;">Crea archivio auto-estraente</span>
<div style="position:absolute;left:811.40px;top:268.80px;width:11.30px;height:11.30px;background:#989999"></div>
<div style="position:absolute;left:812.40px;top:269.80px;width:9.30px;height:9.30px;background:#f2f3f4"></div>
<div style="position:absolute;left:813.40px;top:270.80px;width:7.30px;height:7.30px;background:linear-gradient(135deg,#c9cdd2 0%,#e2e5e8 45%,#fafafa 100%)"></div>
<span class="t " style="left:824.50px;top:268.00px;font-size:10px;transform:scaleX(0.8989);color:#000;">Comprimi file condivisi</span>
<div style="position:absolute;left:811.40px;top:291.20px;width:11.30px;height:11.30px;background:#989999"></div>
<div style="position:absolute;left:812.40px;top:292.20px;width:9.30px;height:9.30px;background:#f2f3f4"></div>
<div style="position:absolute;left:813.40px;top:293.20px;width:7.30px;height:7.30px;background:linear-gradient(135deg,#c9cdd2 0%,#e2e5e8 45%,#fafafa 100%)"></div>
<span class="t " style="left:824.50px;top:290.80px;font-size:10px;transform:scaleX(0.9055);color:#000;">Elimina i file dopo la compressione</span>
<div style="position:absolute;left:801.40px;top:332.30px;width:239.40px;height:174.70px;border-radius:3px;background:#ebecf3"></div>
<div style="position:absolute;left:802.40px;top:333.30px;width:237.40px;height:172.70px;border-radius:2px;background:#fff"></div>
<div style="position:absolute;left:807.80px;top:331.30px;width:37.10px;height:3.00px;background:#fff"></div>
<span class="t " style="left:809.10px;top:326.60px;font-size:10px;transform:scaleX(0.8698);color:#000;">Cifratura</span>
<span class="t " style="left:811.20px;top:346.80px;font-size:10px;transform:scaleX(0.9195);color:#000;">Inserisci password:</span>
<div style="position:absolute;left:811.60px;top:362.70px;width:219.20px;height:20.30px;border-radius:1.5px;background:linear-gradient(180deg,#e5e5ee 0,#e3e3ed 1.6px,#f0f0f7 2.2px,#f1f1f7 100%)"></div>
<div style="position:absolute;left:812.60px;top:364.70px;width:217.20px;height:17.30px;background:#fff"></div>
<span class="t " style="left:811.20px;top:391.80px;font-size:10px;transform:scaleX(0.9141);color:#000;">Reinserisci password:</span>
<div style="position:absolute;left:811.60px;top:407.80px;width:219.20px;height:21.00px;border-radius:1.5px;background:linear-gradient(180deg,#e5e5ee 0,#e3e3ed 1.6px,#f0f0f7 2.2px,#f1f1f7 100%)"></div>
<div style="position:absolute;left:812.60px;top:409.80px;width:217.20px;height:18.00px;background:#fff"></div>
<div style="position:absolute;left:811.40px;top:439.40px;width:11.30px;height:11.30px;background:#989999"></div>
<div style="position:absolute;left:812.40px;top:440.40px;width:9.30px;height:9.30px;background:#f2f3f4"></div>
<div style="position:absolute;left:813.40px;top:441.40px;width:7.30px;height:7.30px;background:linear-gradient(135deg,#c9cdd2 0%,#e2e5e8 45%,#fafafa 100%)"></div>
<span class="t " style="left:824.90px;top:438.60px;font-size:10px;transform:scaleX(0.9153);color:#000;">Mostra password</span>
<span class="t " style="left:811.20px;top:460.60px;font-size:10px;transform:scaleX(0.9354);color:#000;">Metodo cifratura:</span>
<div style="position:absolute;left:942.00px;top:458.00px;width:88.80px;height:18.30px;border-radius:3px;background:#888"></div>
<div style="position:absolute;left:943.00px;top:459.00px;width:86.80px;height:16.30px;border-radius:2px;background:linear-gradient(180deg,#f6f6f6 0%,#f0f0f0 45%,#e4e4e4 55%,#dadada 100%);box-shadow:inset 0 0 0 1px rgba(255,255,255,.6)"></div>
<svg style="position:absolute;left:1020.40px;top:465.55px" width="6.8" height="3.8" viewBox="0 0 6.8 3.8"><path d="M0 0 L6.8 0 L3.4 3.8 Z" fill="#111"/></svg>
<span class="t " style="left:945.10px;top:460.60px;font-size:10px;transform:scaleX(0.9363);color:#000;">AES-256</span>
<div style="position:absolute;left:811.40px;top:484.40px;width:11.30px;height:11.30px;background:#989999"></div>
<div style="position:absolute;left:812.40px;top:485.40px;width:9.30px;height:9.30px;background:#f2f3f4"></div>
<div style="position:absolute;left:813.40px;top:486.40px;width:7.30px;height:7.30px;background:linear-gradient(135deg,#c9cdd2 0%,#e2e5e8 45%,#fafafa 100%)"></div>
<span class="t " style="left:824.50px;top:483.80px;font-size:10px;transform:scaleX(0.9130);color:#000;">Cifra anche il nome dei file</span>
<div style="position:absolute;left:770.60px;top:601.60px;width:81.60px;height:20.60px;border-radius:3px;background:#3fa9dc"></div>
<div style="position:absolute;left:771.60px;top:602.60px;width:79.60px;height:18.60px;border-radius:2px;background:#52d3f7"></div>
<div style="position:absolute;left:772.60px;top:603.60px;width:77.60px;height:16.60px;border-radius:1px;background:linear-gradient(180deg,#f8f8f8 0%,#efefef 48%,#e2e2e2 52%,#d8d8d8 100%)"></div>
<span class="t " style="left:803.10px;top:605.60px;font-size:10px;transform:scaleX(1.0381);color:#000;">OK</span>
<div style="position:absolute;left:864.20px;top:601.60px;width:82.20px;height:20.60px;border-radius:3px;background:#999"></div>
<div style="position:absolute;left:865.20px;top:602.60px;width:80.20px;height:18.60px;border-radius:2px;background:linear-gradient(180deg,#f6f6f6 0%,#efefef 48%,#e2e2e2 52%,#d6d6d6 100%);box-shadow:inset 0 0 0 1px rgba(255,255,255,.7)"></div>
<span class="t " style="left:889.30px;top:605.60px;font-size:10px;transform:scaleX(0.9222);color:#000;">Annulla</span>
<div style="position:absolute;left:958.00px;top:601.60px;width:82.60px;height:20.60px;border-radius:3px;background:#999"></div>
<div style="position:absolute;left:959.00px;top:602.60px;width:80.60px;height:18.60px;border-radius:2px;background:linear-gradient(180deg,#f6f6f6 0%,#efefef 48%,#e2e2e2 52%,#d6d6d6 100%);box-shadow:inset 0 0 0 1px rgba(255,255,255,.7)"></div>
<span class="t " style="left:988.10px;top:605.60px;font-size:10px;transform:scaleX(0.9649);color:#000;">Aiuto</span>
</div></div>
</body></html>
